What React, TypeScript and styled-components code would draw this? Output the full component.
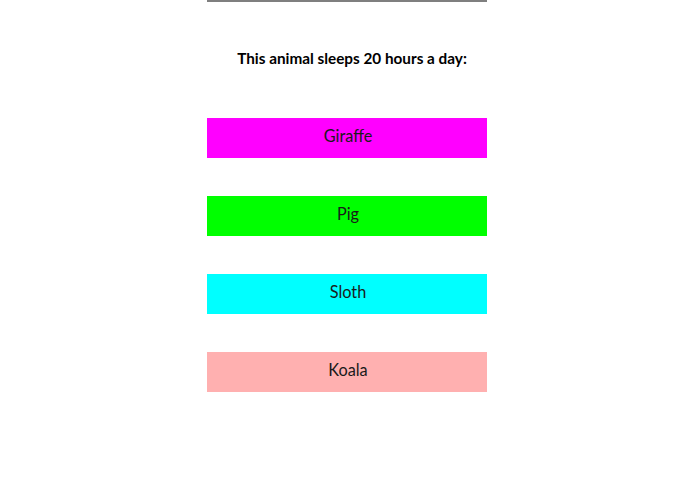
import styled, { createGlobalStyle } from 'styled-components';

const GlobalStyle = createGlobalStyle`
  html, body {
    margin: 0;
    padding: 0;
    background: #fff;
    font-family: Lato, "Open Sans", sans-serif;
  }
`;

const Page = styled.div`
  display: flex;
  justify-content: center;
  padding-right: 1px;
`;

const Quiz = styled.div`
  width: 280px;
  border-top: 2px solid #7f7f7f;
  display: flex;
  flex-direction: column;
`;

const Question = styled.h2`
  margin: 0;
  padding: 46px 0 0 10px;
  height: 70px;
  box-sizing: border-box;
  font-size: 15.3px;
  font-weight: 700;
  line-height: 20px;
  text-align: center;
  white-space: nowrap;
  color: #000;
`;

const Answers = styled.div`
  margin-top: 46px;
  display: flex;
  flex-direction: column;
  gap: 38px;
`;

const Answer = styled.button<{ $color: string }>`
  height: 40px;
  width: 100%;
  border: none;
  padding: 0 0 6px 2px;
  background: ${(p) => p.$color};
  font-family: Lato, "Open Sans", sans-serif;
  font-size: 16.3px;
  color: #1a1a1a;
  cursor: pointer;
`;

const answers = [
  { label: 'Giraffe', color: '#ff00ff' },
  { label: 'Pig', color: '#00ff00' },
  { label: 'Sloth', color: '#00ffff' },
  { label: 'Koala', color: '#ffb0b0' },
];

export default function App() {
  return (
    <>
      <GlobalStyle />
      <Page>
        <Quiz>
          <Question>This animal sleeps 20 hours a day:</Question>
          <Answers>
            {answers.map((a) => (
              <Answer key={a.label} $color={a.color}>
                {a.label}
              </Answer>
            ))}
          </Answers>
        </Quiz>
      </Page>
    </>
  );
}
